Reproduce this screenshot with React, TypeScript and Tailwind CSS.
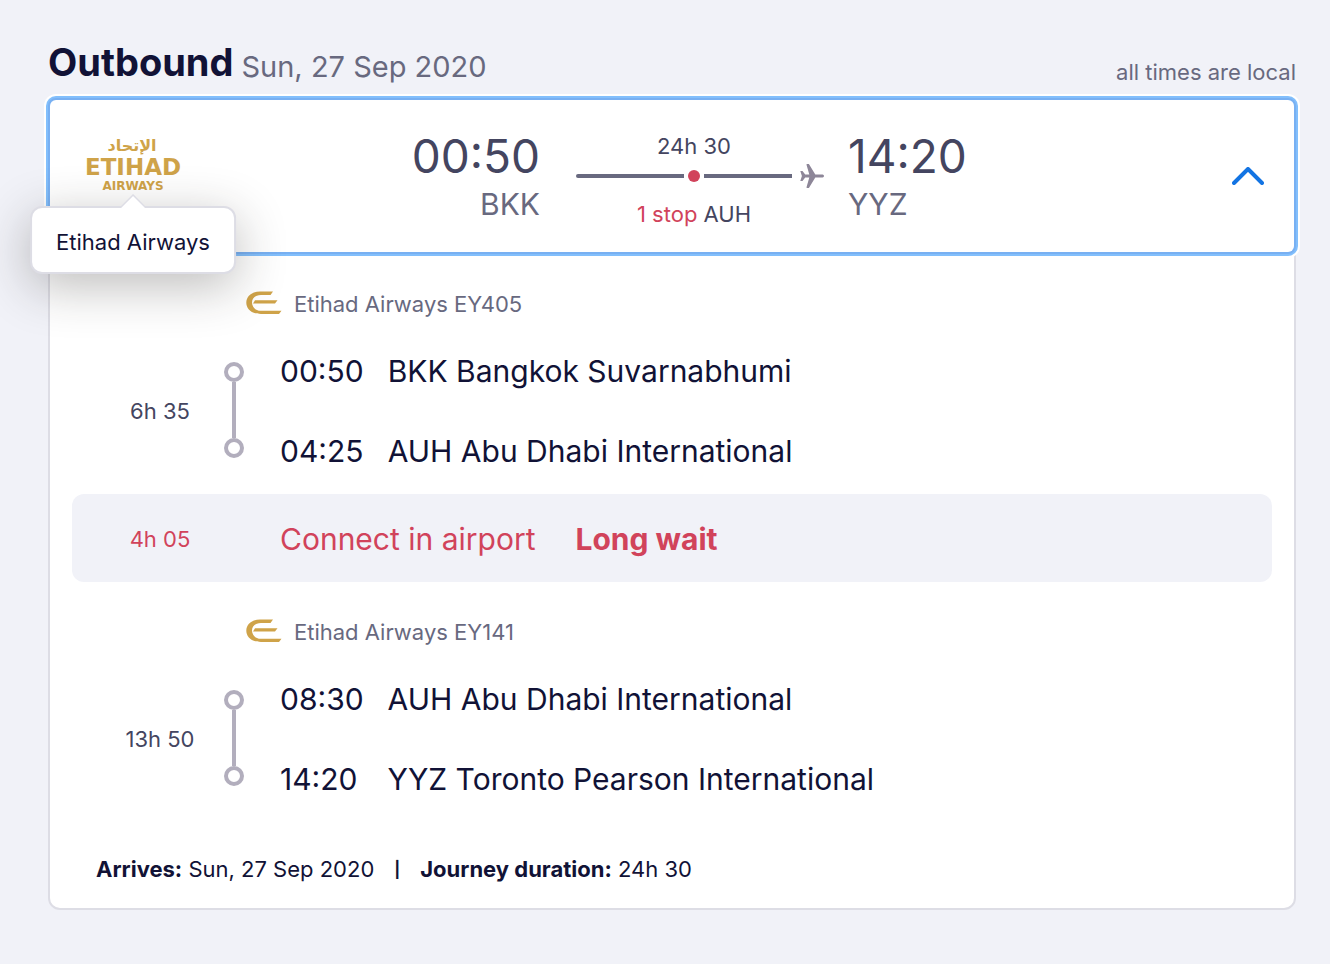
import { useState } from "react";

const segments = [
  {
    flight: "Etihad Airways EY405",
    duration: "6h 35",
    stops: [
      { time: "00:50", airport: "BKK Bangkok Suvarnabhumi" },
      { time: "04:25", airport: "AUH Abu Dhabi International" },
    ],
    connection: {
      duration: "4h 05",
      text: "Connect in airport",
      warning: "Long wait",
    },
  },
  {
    flight: "Etihad Airways EY141",
    duration: "13h 50",
    stops: [
      { time: "08:30", airport: "AUH Abu Dhabi International" },
      { time: "14:20", airport: "YYZ Toronto Pearson International" },
    ],
  },
];

function EtihadLogo() {
  return (
    <svg
      viewBox="0 0 106 54"
      className="block h-[54px] w-[106px] overflow-visible"
      fill="#cfa349"
      role="img"
      aria-label="Etihad Airways"
    >
      <text
        x="52"
        y="12"
        textAnchor="middle"
        fontFamily="'DejaVu Sans', sans-serif"
        fontWeight="bold"
        fontSize="16"
      >
        الإتحاد
      </text>
      <text
        x="53"
        y="36"
        textAnchor="middle"
        fontFamily="'DejaVu Sans', sans-serif"
        fontWeight="bold"
        fontSize="23"
      >
        ETIHAD
      </text>
      <text
        x="53"
        y="51"
        textAnchor="middle"
        fontFamily="'DejaVu Sans', sans-serif"
        fontWeight="bold"
        fontSize="12"
      >
        AIRWAYS
      </text>
    </svg>
  );
}

function EtihadMark() {
  return (
    <svg
      viewBox="0 1 36 24"
      className="block h-6 w-9 shrink-0 overflow-visible"
      fill="#cfa349"
      aria-hidden="true"
    >
      <path d="M27 0.500 L24.500 4 H15 C9 4 6 7.500 6 11.500 C6 16 9.500 19.800 15 19.800 H35.500 L33 23 H15 C6 23 0.300 18 0.300 11.700 C0.300 5.200 6 0.500 14 0.500 Z" />
      <path d="M9 9.300 H31.500 L29 12.500 H7 Z" />
    </svg>
  );
}

function Plane() {
  return (
    <svg
      viewBox="0 0 24 24"
      className="block h-6 w-6 shrink-0"
      fill="#8d8698"
      aria-hidden="true"
    >
      <path d="M0.300 7 H2.500 L5.200 10.600 H9.300 L6.500 0.800 Q6.300 0 7.100 0 H8.900 L15.300 10.600 H22.600 Q24 10.800 24 12 Q24 13.200 22.600 13.400 H15.300 L8.900 24 H7.100 Q6.300 24 6.500 23.200 L9.300 13.400 H5.200 L2.500 17 H0.300 L1.900 12 Z" />
    </svg>
  );
}

function Segment({ segment }) {
  return (
    <li>
      <div className="pt-8 pb-1">
        <div className="flex h-9 items-center gap-3 pl-[174px] text-[22px] text-[#68697f]">
          <EtihadMark />
          {segment.flight}
        </div>
        <div className="mt-2 flex items-center pl-6">
          <span className="w-32 pt-0.5 text-center text-[22px] text-[#444560]">
            {segment.duration}
          </span>
          <div className="flex w-5 flex-col items-center">
            <span className="size-5 rounded-full border-4 border-[#b2aebd]" />
            <span className="h-14 w-1 bg-[#b2aebd]" />
            <span className="size-5 rounded-full border-4 border-[#b2aebd]" />
          </div>
          <div className="ml-9 grid auto-rows-[80px] grid-cols-[auto_1fr] items-center gap-x-6 text-[30px]">
            {segment.stops.map((stop) => (
              <div key={stop.time} className="contents">
                <span className="pt-0.5">{stop.time}</span>
                <span className="pt-0.5">{stop.airport}</span>
              </div>
            ))}
          </div>
        </div>
      </div>
      {segment.connection && (
        <div className="flex h-[88px] items-center rounded-xl bg-[#f1f2f8] pt-0.5 pl-6 text-[30px] text-[#d1435b]">
          <span className="w-32 text-center text-[22px]">
            {segment.connection.duration}
          </span>
          <span className="ml-14">{segment.connection.text}</span>
          <strong className="ml-10 font-bold">
            {segment.connection.warning}
          </strong>
        </div>
      )}
    </li>
  );
}

export default function App() {
  const [open, setOpen] = useState(true);

  return (
    <main className="min-h-screen bg-[#f1f2f8] pt-[42px] pr-[34px] pb-12 pl-12 font-['Inter',sans-serif] text-[#111236]">
      <header className="mb-3 flex items-end justify-between">
        <div className="flex items-end gap-2">
          <h1 className="pb-1 text-[38px] leading-10 font-bold">Outbound</h1>
          <span className="text-[29px] leading-[38px] text-[#68697f]">
            Sun, 27 Sep 2020
          </span>
        </div>
        <span className="text-[22px] leading-7 text-[#68697f]">
          all times are local
        </span>
      </header>

      <section className="rounded-xl border-2 border-[#dddde5] bg-white">
        <button
          type="button"
          aria-expanded={open}
          onClick={() => setOpen(!open)}
          className="relative grid h-[152px] w-full grid-cols-[106px_1fr_248px_1fr_50px] items-center rounded-md bg-white px-[30px] text-left text-[#444560] shadow-[0_0_0_2px_#78b0f2,0_0_0_4px_#82bffc,0_0_0_6px_#fff] outline-none"
        >
          <span className="relative pb-5">
            <EtihadLogo />
            <span
              role="tooltip"
              className="absolute top-[67px] left-1/2 z-10 -translate-x-1/2 rounded-xl border-2 border-[#dddde5] bg-white px-6 pt-[18px] pb-[14px] text-[22px] leading-8 whitespace-nowrap text-[#111236] shadow-[0_12px_50px_0_rgba(37,32,31,0.3)]"
            >
              <svg
                viewBox="0 0 26 14"
                className="absolute -top-[14px] left-1/2 h-[14px] w-[26px] -translate-x-1/2"
                fill="#fff"
                aria-hidden="true"
              >
                <path d="M0 14 L13 1 L26 14" stroke="#dddde5" strokeWidth="1.500" />
              </svg>
              Etihad Airways
            </span>
          </span>
          <span className="flex flex-col items-end pr-9">
            <span className="text-[46px] leading-[56px]">00:50</span>
            <span className="text-[30px] leading-10 text-[#68697f]">BKK</span>
          </span>
          <span className="flex flex-col pt-2">
            <span className="pr-3 text-center text-[22px] leading-8">24h 30</span>
            <span className="mt-0.5 mb-2.5 flex h-6 items-center">
              <span className="h-1 flex-1 rounded-l-full bg-[#68697f]" />
              <span className="mx-1 size-3 rounded-full bg-[#d1435b]" />
              <span className="mr-2 h-1 w-[88px] bg-[#68697f]" />
              <Plane />
            </span>
            <span className="pr-3 text-center text-[22px] leading-8">
              <span className="text-[#d1435b]">1 stop</span> AUH
            </span>
          </span>
          <span className="flex flex-col items-start pl-6">
            <span className="text-[46px] leading-[56px]">14:20</span>
            <span className="text-[30px] leading-10 text-[#68697f]">YYZ</span>
          </span>
          <svg
            viewBox="0 0 32 18"
            className="block h-[18px] w-8 justify-self-end"
            fill="none"
            stroke="#1374e3"
            strokeWidth="4"
            strokeLinecap="round"
            strokeLinejoin="round"
            aria-hidden="true"
          >
            <path d="M2 16 L16 2 L30 16" />
          </svg>
        </button>

        {open && (
          <div className="px-[22px] pt-0.5">
            <ul>
              {segments.map((segment) => (
                <Segment key={segment.flight} segment={segment} />
              ))}
            </ul>
            <p className="flex items-center gap-5 px-6 pt-8 pb-6 text-[22px] leading-[30px]">
              <span>
                <strong className="font-bold">Arrives:</strong> Sun, 27 Sep 2020
              </span>
              <span className="text-base font-bold">|</span>
              <span>
                <strong className="font-bold">Journey duration:</strong> 24h 30
              </span>
            </p>
          </div>
        )}
      </section>
    </main>
  );
}
